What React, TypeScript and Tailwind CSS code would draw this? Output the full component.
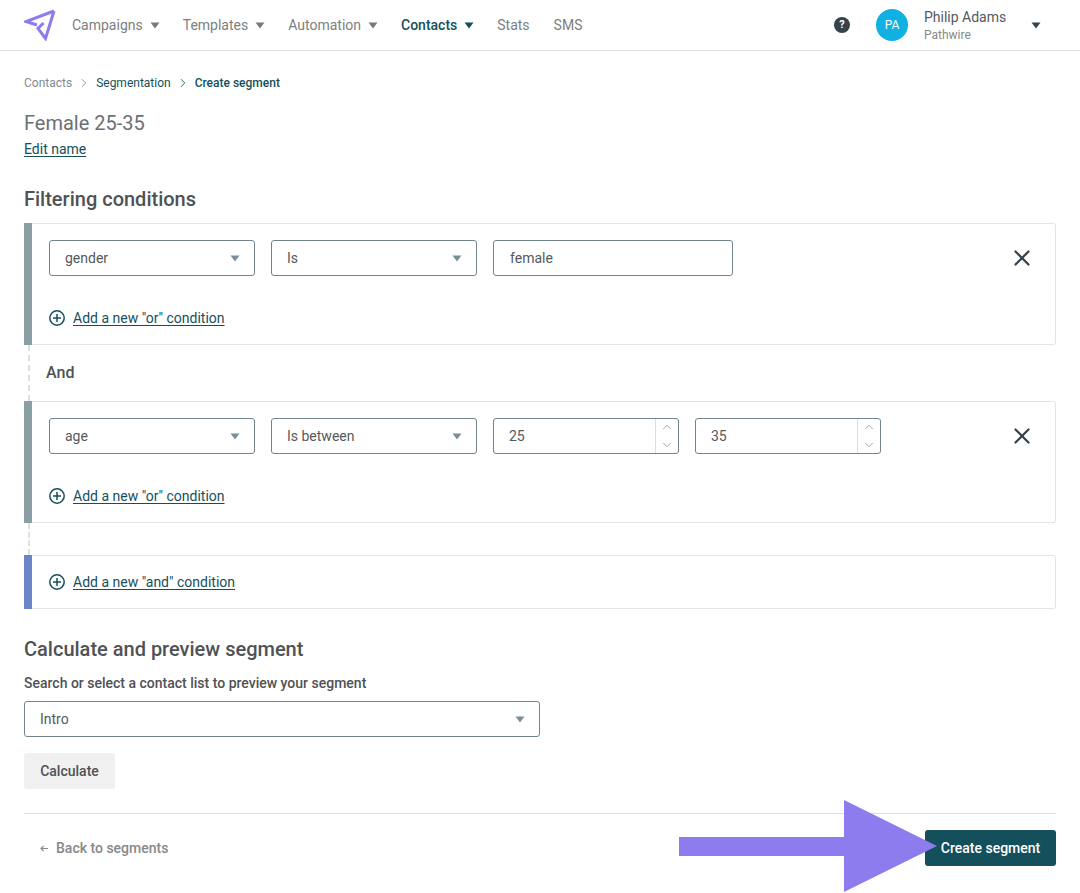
import React from "react";
import { X, ChevronRight, ChevronUp, ChevronDown } from "lucide-react";

const Caret = ({ className = "" }: { className?: string }) => (
  <svg viewBox="0 0 8 5" className={`w-2 h-[5px] shrink-0 overflow-visible ${className}`}>
    <path d="M-.5-.4h9L4 5.500z" fill="currentColor" />
  </svg>
);

const PlusCircle = () => (
  <svg viewBox="0 0 16 16" className="w-4 h-4 shrink-0 text-[#14505c]" fill="none" stroke="currentColor">
    <circle cx="8" cy="8" r="7.2" strokeWidth="1.5" />
    <path d="M8 4v8M4 8h8" strokeWidth="1.5" />
  </svg>
);

const NavItem = ({ label, active }: { label: string; active?: boolean }) => (
  <div className={`flex items-center gap-2 ${active ? "text-[#14505c] font-medium" : "text-[#7b7f80]"}`}>
    <span className="text-sm">{label}</span>
    <Caret className={active ? "text-[#14505c]" : "text-[#7a7a7a]"} />
  </div>
);

const Select = ({ value, width }: { value: string; width: string }) => (
  <div className={`${width} h-9 shrink-0 flex items-center justify-between pl-[15px] pr-[15px] border border-[#72858f] rounded-[3px] bg-white text-sm text-[#55595c]`}>
    <span>{value}</span>
    <Caret className="text-[#7b8d97]" />
  </div>
);

const NumberInput = ({ value }: { value: string }) => (
  <div className="w-[186px] h-9 shrink-0 flex border border-[#72858f] rounded-[3px] bg-white text-sm text-[#55595c]">
    <div className="flex-1 flex items-center pl-[15px]">{value}</div>
    <div className="w-[23px] border-l border-[#dcdfe0] flex flex-col items-center justify-between py-px text-[#8f9aa0]">
      <ChevronUp size={14} strokeWidth={1.4} />
      <ChevronDown size={14} strokeWidth={1.4} />
    </div>
  </div>
);

const AddLink = ({ label }: { label: string }) => (
  <div className="flex items-center gap-2">
    <PlusCircle />
    <a href="#" className="text-sm text-[#14505c] underline underline-offset-2">
      {label}
    </a>
  </div>
);

const ConditionCard = ({ children }: { children: React.ReactNode }) => (
  <div className="flex h-[122px] border border-[#e3e5e5] border-l-0 rounded-r-[3px]">
    <div className="w-2 bg-[#8a9fa3] -my-px" />
    <div className="flex-1 pl-[17px] pr-6 pt-4">
      <div className="flex items-center gap-4 h-9">
        {children}
        <X size={26} strokeWidth={2.1} className="ml-auto -mr-1 text-[#36434b]" />
      </div>
      <div className="mt-8">
        <AddLink label={'Add a new "or" condition'} />
      </div>
    </div>
  </div>
);

export default function App() {
  return (
    <div className="relative w-[1080px] h-[893px] overflow-hidden bg-white font-['Roboto',sans-serif]">
      <header className="h-[51px] border-b border-[#dfe1e1] flex items-center pl-6 pr-10">
        <svg viewBox="0 0 32 32" className="w-8 h-8 mr-4 shrink-0" fill="none" stroke="#8c7cee" strokeWidth="3">
          <path d="M30 2 2 12.500l11 3.500M30 2l-8.500 27.500L14 19.500 19.500 14" strokeLinejoin="miter" />
        </svg>
        <nav className="flex items-center gap-6">
          <NavItem label="Campaigns" />
          <NavItem label="Templates" />
          <NavItem label="Automation" />
          <NavItem label="Contacts" active />
          <span className="text-sm text-[#7b7f80]">Stats</span>
          <span className="text-sm text-[#7b7f80]">SMS</span>
        </nav>
        <div className="ml-auto flex items-center">
          <div className="w-4 h-4 rounded-full bg-[#36434b] text-white text-[11px] font-bold flex items-center justify-center">
            ?
          </div>
          <div className="ml-[26px] w-8 h-8 rounded-full bg-[#0fb0e2] text-white text-xs flex items-center justify-center">
            PA
          </div>
          <div className="ml-4 w-[108px]">
            <div className="text-sm leading-4 text-[#55595c]">Philip Adams</div>
            <div className="text-xs leading-[14px] mt-[3px] text-[#85898b]">Pathwire</div>
          </div>
          <Caret className="text-[#36434b]" />
        </div>
      </header>

      <main className="px-6">
        <div className="flex items-center pt-[25px] text-xs leading-[14px]">
          <span className="text-[#85898f]">Contacts</span>
          <ChevronRight size={14} strokeWidth={1.5} className="mx-[5px] text-[#85898f]" />
          <span className="text-[#14505c]">Segmentation</span>
          <ChevronRight size={14} strokeWidth={1.5} className="mx-[5px] text-[#14505c]" />
          <span className="text-[#14505c] font-medium">Create segment</span>
        </div>

        <h1 className="mt-[19px] text-xl leading-7 text-[#6a7175]">Female 25-35</h1>
        <a href="#" className="block mt-[2px] text-sm leading-5 text-[#14505c] underline underline-offset-2">
          Edit name
        </a>

        <h2 className="mt-[26px] text-xl leading-7 font-medium text-[#4f5254]">Filtering conditions</h2>

        <div className="mt-[10px]">
          <ConditionCard>
            <Select value="gender" width="w-[206px]" />
            <Select value="Is" width="w-[206px]" />
            <div className="w-[240px] h-9 flex items-center pl-4 border border-[#72858f] rounded-[3px] text-sm text-[#55595c]">
              female
            </div>
          </ConditionCard>

          <div className="ml-1 h-14 border-l-2 border-dashed border-[#dfe1e1] flex items-center pl-4">
            <span className="text-base font-medium text-[#4f5254]">And</span>
          </div>

          <ConditionCard>
            <Select value="age" width="w-[206px]" />
            <Select value="Is between" width="w-[206px]" />
            <NumberInput value="25" />
            <NumberInput value="35" />
          </ConditionCard>

          <div className="ml-1 h-8 border-l-2 border-dashed border-[#dfe1e1]" />

          <div className="flex h-[54px] border border-[#e3e5e5] border-l-0 rounded-r-[3px]">
            <div className="w-2 bg-[#6b84c8] -my-px" />
            <div className="flex-1 pl-[17px] flex items-center">
              <AddLink label={'Add a new "and" condition'} />
            </div>
          </div>
        </div>

        <h2 className="mt-[26px] text-xl leading-7 font-medium text-[#4f5254]">Calculate and preview segment</h2>
        <div className="mt-[11px] text-sm leading-[18px] font-medium text-[#4f5254]">
          Search or select a contact list to preview your segment
        </div>
        <div className="mt-[9px]">
          <Select value="Intro" width="w-[516px]" />
        </div>
        <button className="block mt-4 w-[91px] h-9 rounded-[3px] bg-[#f0f0f0] text-sm font-medium text-[#4f5254]">
          Calculate
        </button>

        <div className="mt-6 pt-4 border-t border-[#dfe1e1] flex items-center justify-between">
          <div className="flex items-center pl-4 text-sm font-medium text-[#85898b]">
            <svg viewBox="0 0 8 7" className="w-2 h-[7px] mr-2 shrink-0" fill="none" stroke="currentColor" strokeWidth="1.1">
              <path d="M8 3.500H1M3.500 1 1 3.500 3.500 6" />
            </svg>
            <span>Back to segments</span>
          </div>
          <button className="w-[131px] h-9 rounded-[3px] bg-[#14505c] text-sm font-medium text-white">
            Create segment
          </button>
        </div>
      </main>

      {/* annotation arrow over the page */}
      <svg viewBox="0 0 258 92" className="absolute left-[679px] top-[800px] w-[258px] h-[92px]">
        <path d="M0 37h165V0l93 46-93 46V56H0z" fill="#8c7cee" />
      </svg>
    </div>
  );
}
